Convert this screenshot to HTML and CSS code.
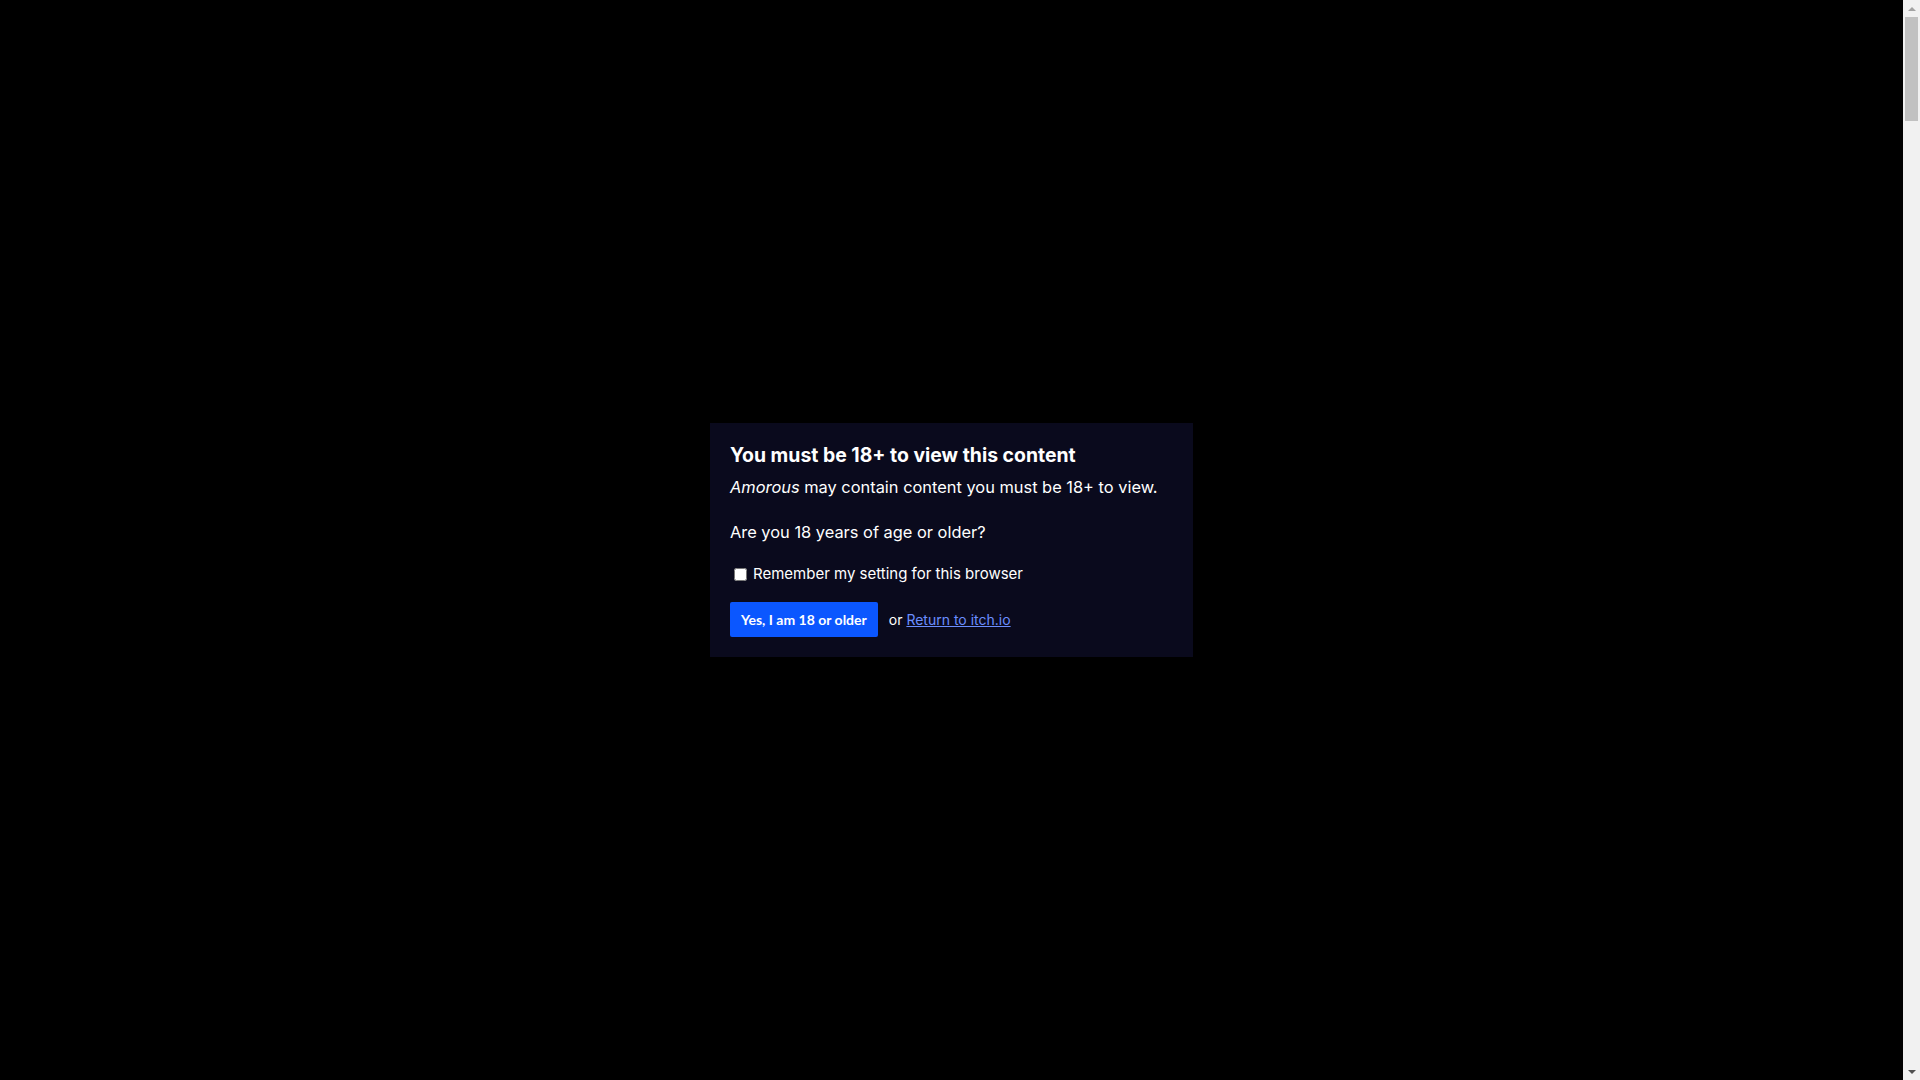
FILE: index.html
```html
<!DOCTYPE html>
<html lang="en">
<head>
<meta charset="utf-8">
<title>Amorous</title>
<link rel="stylesheet" href="styles.css">
</head>
<body>
<div class="overlay">
  <div class="dialog">
    <h2 class="title">You must be 18+ to view this content</h2>
    <p class="text"><em>Amorous</em> may contain content you must be 18+ to view.</p>
    <p class="text question">Are you 18 years of age or older?</p>
    <label class="remember"><input type="checkbox" class="check"> Remember my setting for this browser</label>
    <div class="actions">
      <button class="btn" type="button">Yes, I am 18 or older</button>
      <span class="or">or <a href="#" class="link">Return to itch.io</a></span>
    </div>
  </div>
</div>
<div class="scrollbar">
  <div class="arrow up"></div>
  <div class="track"><div class="thumb"></div></div>
  <div class="arrow down"></div>
</div>
</body>
</html>
```
FILE: styles.css
```css
html, body {
  margin: 0;
  padding: 0;
  background: #000;
}
body {
  font-family: Inter, "Noto Sans", sans-serif;
  color: #fff;
}
.overlay {
  position: fixed;
  top: 0;
  left: 0;
  right: 17px;
  bottom: 0;
  display: flex;
  align-items: center;
  justify-content: center;
}
.dialog {
  box-sizing: border-box;
  width: 483px;
  padding: 20px;
  background: #0a0a1d;
}
.title {
  margin: 0 0 8px;
  font-size: 19.4px;
  line-height: 24px;
  font-weight: 700;
  white-space: nowrap;
}
.text {
  margin: 0 0 21px;
  font-size: 16.4px;
  line-height: 24px;
  white-space: nowrap;
}
.text.question {
  margin-bottom: 20px;
}
.remember {
  display: flex;
  align-items: center;
  font-size: 15px;
  line-height: 20px;
}
.check {
  width: 13px;
  height: 13px;
  margin: 0 6px 0 4px;
}
.actions {
  display: flex;
  align-items: center;
  margin-top: 18px;
}
.btn {
  height: 35px;
  padding: 0 11px;
  border: 0;
  border-radius: 2px;
  background: #0b57ff;
  color: #fff;
  font-family: Lato, "Liberation Sans", sans-serif;
  font-weight: 700;
  font-size: 14px;
}
.or {
  margin-left: 11px;
  font-size: 14px;
}
.link {
  color: #6b8eff;
  text-decoration: underline;
}
.scrollbar {
  position: fixed;
  top: 0;
  right: 0;
  bottom: 0;
  width: 17px;
  background: #f1f1f1;
  display: flex;
  flex-direction: column;
}
.arrow {
  height: 17px;
  display: flex;
  align-items: center;
  justify-content: center;
}
.arrow::before {
  content: "";
  width: 0;
  height: 0;
  border-left: 4px solid transparent;
  border-right: 4px solid transparent;
}
.arrow.up::before {
  border-bottom: 4px solid #a3a3a3;
}
.arrow.down::before {
  border-top: 4px solid #505050;
}
.track {
  flex: 1;
  padding: 0 2px;
}
.thumb {
  height: 104px;
  background: #c1c1c1;
}
```
